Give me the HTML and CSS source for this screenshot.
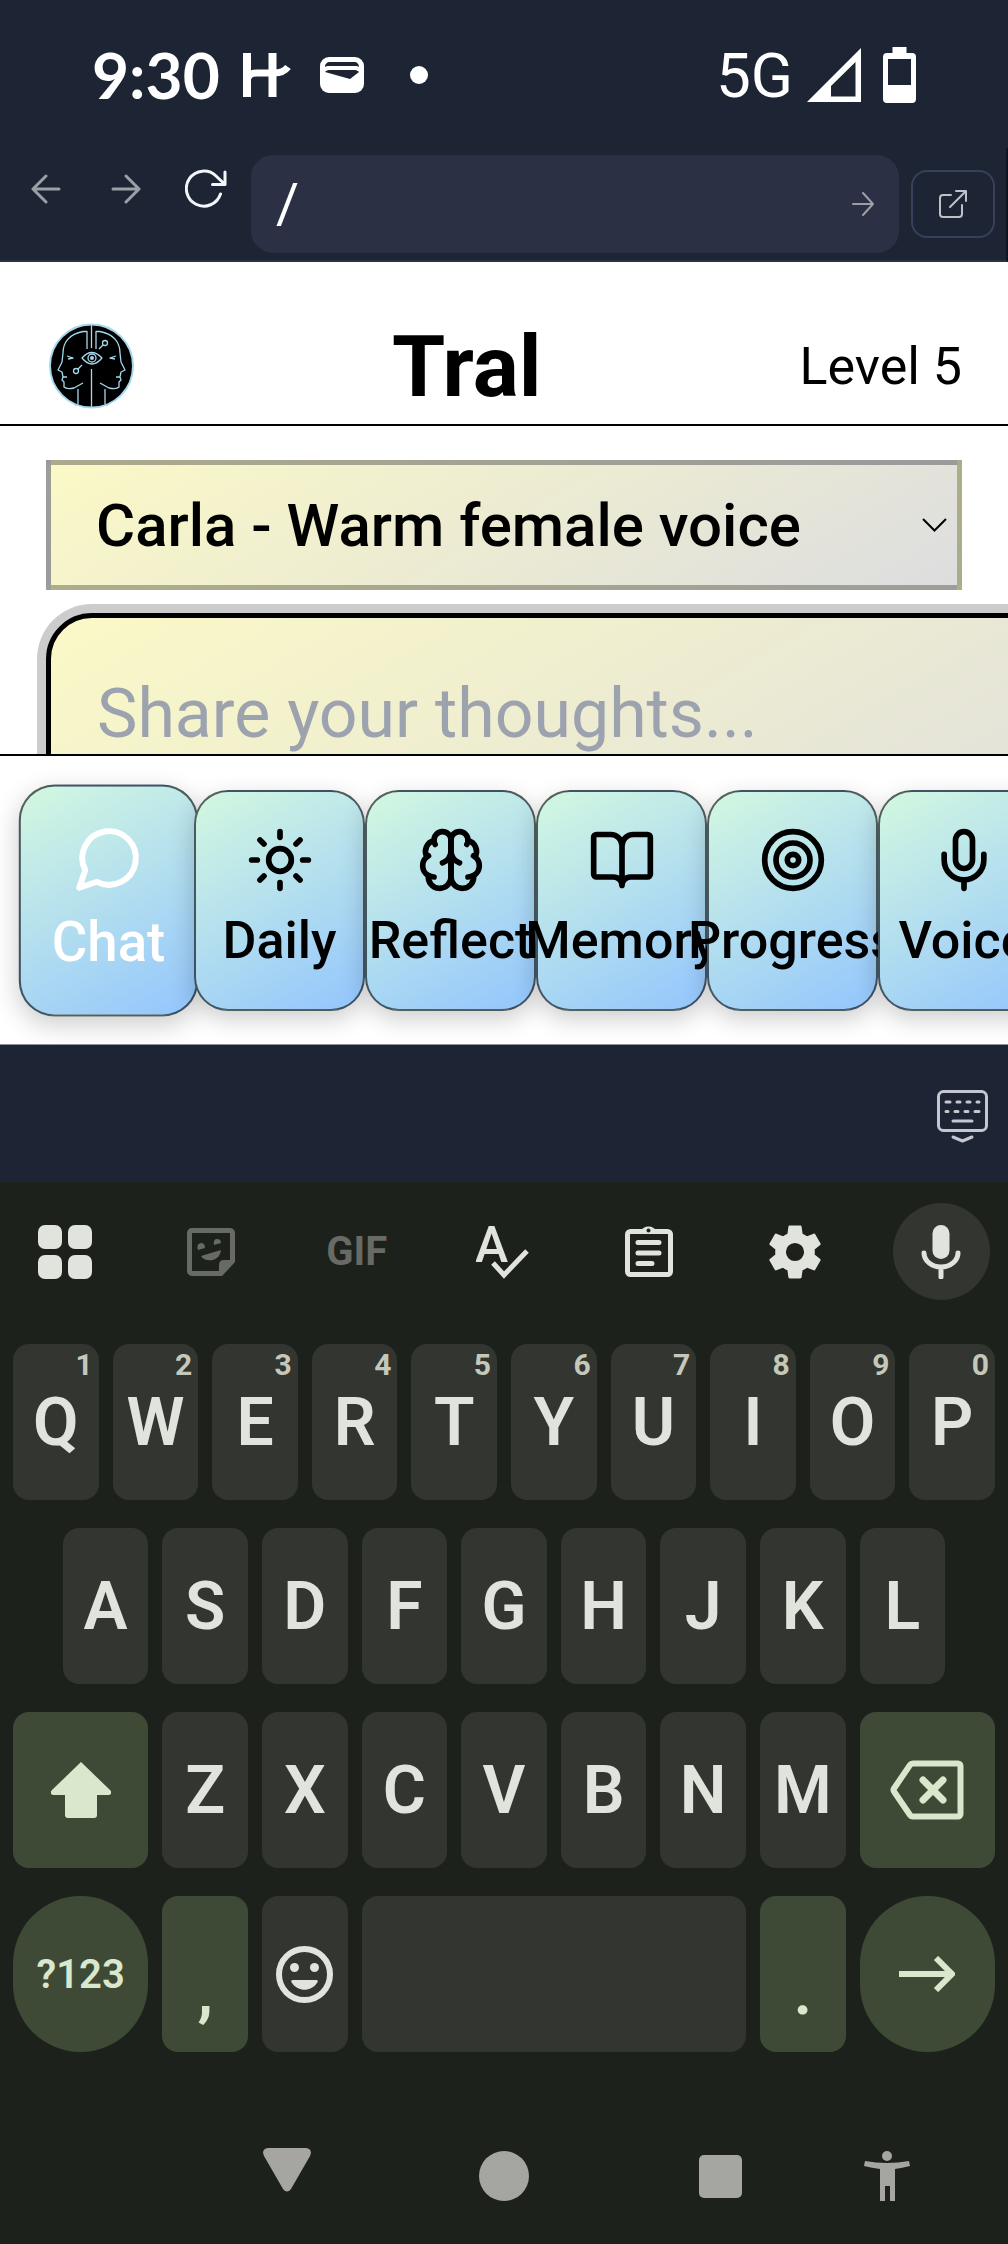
FILE: index.html
```html
<!DOCTYPE html>
<html lang="en">
<head>
<meta charset="utf-8">
<meta name="viewport" content="width=device-width, initial-scale=1">
<title>Tral</title>
<link rel="stylesheet" href="styles.css">
</head>
<body>
<div class="status">
  <div class="status-left">
    <time class="clock">9:30</time>
    <svg class="app-mark" width="50" height="46" viewBox="0 0 50 46"><path d="M5 1v44M30.500 1v44" fill="none" stroke="#fff" stroke-width="8"/><path d="M5 31c0-8 4-10 10-10h17c7 0 11-2 14-6" fill="none" stroke="#fff" stroke-width="7"/></svg>
    <svg class="wallet" width="44" height="36" viewBox="0 0 44 36"><rect width="44" height="36" rx="9" fill="#fff"/><path d="M5 10c0-3 2-5 5-5h24c3 0 5 2 5 5-1-1-2-1-4-1H9c-2 0-3 0-4 1zM5 15c1-1 2-2 4-2h26c2 0 3 1 4 2l-9 7z" fill="#1d2333"/></svg>
    <span class="dot"></span>
  </div>
  <div class="status-right">
    <span class="network">5G</span>
    <svg class="signal" width="54" height="54" viewBox="0 0 54 54"><path fill="#fff" fill-rule="evenodd" d="M0 54 54 0v54zM24 48.500h24.500V14L24 38z"/></svg>
    <svg width="33" height="56" viewBox="0 0 33 56"><path fill="#fff" fill-rule="evenodd" d="M9.500 0h14v6H29a4 4 0 0 1 4 4v42a4 4 0 0 1-4 4H4a4 4 0 0 1-4-4V10a4 4 0 0 1 4-4h5.500zM5 12v26h23V12z"/></svg>
  </div>
</div>

<div class="toolbar">
  <button class="tool" aria-label="Back"><svg width="30" height="30" viewBox="0 0 30 30"><path d="M28 15H2M15 2 2 15l13 13"/></svg></button>
  <button class="tool" aria-label="Forward"><svg width="30" height="30" viewBox="0 0 30 30"><path d="M2 15h26M15 2l13 13-13 13"/></svg></button>
  <button class="tool tool-active" aria-label="Reload"><svg width="42" height="40" viewBox="0 0 42 40"><path d="M35.500 25A17.500 17.500 0 1 1 31 7l9 8.500M40 3v12.500H27.500"/></svg></button>
  <form class="address">
    <input class="address-input" type="text" value="/" aria-label="Address">
    <button class="go" type="button" aria-label="Go"><svg width="22" height="24" viewBox="0 0 22 24"><path d="M1 12h20M11 1l10 11-10 11"/></svg></button>
  </form>
  <button class="open" aria-label="Open in new tab"><svg width="30" height="30" viewBox="0 0 30 30"><path d="M13 6H5a3 3 0 0 0-3 3v16a3 3 0 0 0 3 3h16a3 3 0 0 0 3-3v-9M12 18 28 2M18 2h10v10"/></svg></button>
</div>

<div class="app">
  <header class="header">
    <svg class="logo" width="85" height="86" viewBox="0 0 85 86">
      <circle cx="42.500" cy="43" r="41.500" fill="#000" stroke="#a6d8ee" stroke-width="2"/>
      <g fill="none" stroke="#a6d8ee" stroke-width="1.300" stroke-linejoin="round">
        <path d="M42.500 1v24M42.500 46v39"/>
        <path d="M38 26V8.500h-4C20 11 14 20 14 30l-1 9-4 8 4 2 1 5-1 3 2 2v5c2 2 5 2 10 1l9-5M29 66v15l-3 2"/>
        <path d="M47 26V8.500h4C65 11 71 20 71 30l1 9 4 8-4 2-1 5 1 3-2 2v5c-2 2-5 2-10 1l-9-5M56 66v15l3 2"/>
        <path d="M33 35q9.500-11 20 0-10 12-20 0z"/>
        <circle cx="43" cy="35" r="4"/><circle cx="56" cy="20" r="2.500"/><circle cx="27" cy="48" r="2.500"/>
        <path d="m54 22-4 4m-17 16-4 4M18 33l6 2-5 1M67 33l-6 2 5 1M14 54h4M71 54h-4"/>
      </g>
      <circle cx="43" cy="35" r="2" fill="#a6d8ee"/>
    </svg>
    <h1 class="title">Tral</h1>
    <span class="level">Level 5</span>
  </header>

  <main class="content">
    <div class="voice">
      <select class="voice-select" aria-label="Voice"><option>Carla - Warm female voice</option></select>
      <svg class="chevron" width="25" height="14" viewBox="0 0 25 14"><path d="M1 1l11.500 11.500L24 1" fill="none" stroke="#000" stroke-width="2"/></svg>
    </div>
    <textarea class="thoughts" placeholder="Share your thoughts..." aria-label="Your thoughts"></textarea>
  </main>

  <nav class="tabs">
    <button class="tab tab-current"><svg class="icon" viewBox="0 0 24 24"><path d="M7.900 20A9 9 0 1 0 4 16.100L2 22Z"/></svg>Chat</button>
    <button class="tab"><svg class="icon" viewBox="0 0 24 24"><circle cx="12" cy="12" r="4"/><path d="M12 2v2M12 20v2M4.930 4.930l1.410 1.410M17.660 17.660l1.410 1.410M2 12h2M20 12h2M6.340 17.660l-1.410 1.410M19.070 4.930l-1.410 1.410"/></svg>Daily</button>
    <button class="tab"><svg class="icon" viewBox="0 0 24 24"><path d="M12 5a3 3 0 1 0-5.997.125 4 4 0 0 0-2.526 5.770 4 4 0 0 0 .556 6.588A4 4 0 1 0 12 18Z"/><path d="M12 5a3 3 0 1 1 5.997.125 4 4 0 0 1 2.526 5.770 4 4 0 0 1-.556 6.588A4 4 0 1 1 12 18Z"/><path d="M15 13a4.500 4.500 0 0 1-3-4 4.500 4.500 0 0 1-3 4M17.599 6.500a3 3 0 0 0 .399-1.375M6.003 5.125A3 3 0 0 0 6.401 6.500M3.477 10.896a4 4 0 0 1 .585-.396M19.938 10.500a4 4 0 0 1 .585.396M6 18a4 4 0 0 1-1.967-.516M19.967 17.484A4 4 0 0 1 18 18"/></svg>Reflect</button>
    <button class="tab"><svg class="icon" viewBox="0 0 24 24"><path d="M12 7v14M3 18a1 1 0 0 1-1-1V4a1 1 0 0 1 1-1h5a4 4 0 0 1 4 4 4 4 0 0 1 4-4h5a1 1 0 0 1 1 1v13a1 1 0 0 1-1 1h-6a3 3 0 0 0-3 3 3 3 0 0 0-3-3z"/></svg>Memory</button>
    <button class="tab"><svg class="icon" viewBox="0 0 24 24"><circle cx="12" cy="12" r="10"/><circle cx="12" cy="12" r="6"/><circle cx="12" cy="12" r="2"/></svg>Progress</button>
    <button class="tab"><svg class="icon" viewBox="0 0 24 24"><path d="M12 2a3 3 0 0 0-3 3v7a3 3 0 0 0 6 0V5a3 3 0 0 0-3-3Z"/><path d="M19 10v2a7 7 0 0 1-14 0v-2M12 19v3"/></svg>Voice</button>
  </nav>
</div>

<div class="dock">
  <button class="hide-keys" aria-label="Hide keyboard"><svg width="52" height="54" viewBox="0 0 52 54" fill="none" stroke="#c4c7cf" stroke-width="3" stroke-linecap="round" stroke-linejoin="round"><rect x="1.500" y="1.500" width="48" height="39" rx="5"/><path d="M9 12h4M20 12h3M30 12h3M40 12h2M9 21.500h2M18 21.500h3M28 21.500h3M38 21.500h4M16 31h19M16 47l9.500 4 9.500-4"/></svg></button>
</div>

<div class="keyboard">
  <div class="suggest">
    <button class="chip" aria-label="Apps"><svg width="54" height="54" viewBox="0 0 54 54" fill="#e1e4dc"><rect width="24" height="24" rx="7"/><rect x="30" width="24" height="24" rx="7"/><rect y="30" width="24" height="24" rx="7"/><rect x="30" y="30" width="24" height="24" rx="7"/></svg></button>
    <button class="chip" aria-label="Stickers"><svg width="48" height="48" viewBox="0 0 48 48"><path d="M5 2.500h38A2.500 2.500 0 0 1 45.500 5v28L34 45.500H5A2.500 2.500 0 0 1 2.500 43V5A2.500 2.500 0 0 1 5 2.500z" fill="none" stroke="#686a64" stroke-width="5"/><path fill="#686a64" d="M32 46v-9q0-5 5-5h9zM14 28l20-6c-1 12-16 13-20 6zM11 22q-2-6 3-7 4 0 4 5zM27 17q-1-6 3-6 4 0 4 4z"/></svg></button>
    <button class="chip chip-gif">GIF</button>
    <button class="chip" aria-label="Spelling"><svg width="54" height="54" viewBox="0 0 54 54"><text class="spell" x="-1" y="37">A</text><path d="m17 38 11 12 23-24" fill="none" stroke="#e1e4dc" stroke-width="5"/></svg></button>
    <button class="chip" aria-label="Clipboard"><svg width="48" height="58" viewBox="0 0 48 58"><rect x="2.500" y="8.500" width="43" height="43" rx="3" fill="none" stroke="#e1e4dc" stroke-width="5"/><path d="M16 8a8 7 0 0 1 15 0z" fill="#e1e4dc"/><circle cx="23.500" cy="7.500" r="2" fill="#1d211c"/><path d="M13 19.500h21M13 30h21M13 40.500h14" stroke="#e1e4dc" stroke-width="5" stroke-linecap="round"/></svg></button>
    <button class="chip" aria-label="Settings"><svg width="66" height="66" viewBox="0 0 24 24"><path fill="#e1e4dc" d="M19.140 12.940c.04-.3.06-.61.06-.94 0-.32-.02-.64-.07-.94l2.030-1.580c.18-.14.23-.41.12-.61l-1.920-3.320c-.12-.22-.37-.29-.59-.22l-2.390.96c-.5-.38-1.030-.7-1.620-.94l-.36-2.540c-.04-.24-.24-.41-.48-.41h-3.840c-.24 0-.43.17-.47.41l-.36 2.540c-.59.24-1.130.57-1.620.94l-2.390-.96c-.22-.08-.47 0-.59.22L2.740 8.870c-.12.21-.08.47.12.61l2.030 1.580c-.05.3-.09.63-.09.94s.02.64.07.94l-2.030 1.580c-.18.14-.23.41-.12.61l1.920 3.320c.12.22.37.29.59.22l2.390-.96c.5.38 1.030.7 1.620.94l.36 2.540c.05.24.24.41.48.41h3.840c.24 0 .44-.17.47-.41l.36-2.540c.59-.24 1.130-.56 1.620-.94l2.390.96c.22.08.47 0 .59-.22l1.920-3.320c.12-.22.07-.47-.12-.61l-2.010-1.580zM12 15.300a3.300 3.300 0 1 1 0-6.600 3.300 3.300 0 0 1 0 6.600z"/></svg></button>
    <button class="chip chip-mic" aria-label="Voice input"><svg width="40" height="54" viewBox="0 0 40 54"><rect x="11.500" width="17" height="34" rx="8.500" fill="#e1e4dc"/><path d="M3 28a17 14 0 0 0 34 0M20 43v9" fill="none" stroke="#e1e4dc" stroke-width="5" stroke-linecap="round"/></svg></button>
  </div>
  <div class="keys">
    <button class="key">Q<span class="hint">1</span></button>
    <button class="key">W<span class="hint">2</span></button>
    <button class="key">E<span class="hint">3</span></button>
    <button class="key">R<span class="hint">4</span></button>
    <button class="key">T<span class="hint">5</span></button>
    <button class="key">Y<span class="hint">6</span></button>
    <button class="key">U<span class="hint">7</span></button>
    <button class="key">I<span class="hint">8</span></button>
    <button class="key">O<span class="hint">9</span></button>
    <button class="key">P<span class="hint">0</span></button>
    <button class="key key-home">A</button>
    <button class="key">S</button>
    <button class="key">D</button>
    <button class="key">F</button>
    <button class="key">G</button>
    <button class="key">H</button>
    <button class="key">J</button>
    <button class="key">K</button>
    <button class="key">L</button>
    <button class="key key-wide key-green" aria-label="Shift"><svg width="60" height="56" viewBox="0 0 60 56"><path fill="#d9e7cd" d="M30 0 59 28q2 2 1 4-1 1-3 1H46v20q0 3-3 3H17q-3 0-3-3V33H3q-2 0-3-1-1-2 1-4z"/></svg></button>
    <button class="key">Z</button>
    <button class="key">X</button>
    <button class="key">C</button>
    <button class="key">V</button>
    <button class="key">B</button>
    <button class="key">N</button>
    <button class="key">M</button>
    <button class="key key-wide key-green" aria-label="Delete"><svg width="74" height="60" viewBox="0 0 74 60" fill="none" stroke="#d9e7cd" stroke-width="6" stroke-linejoin="round" stroke-linecap="round"><path d="M23 3.500h45a2.500 2.500 0 0 1 2.500 2.500v48a2.500 2.500 0 0 1-2.500 2.500H23q-2 0-3-1.500L4 31.500q-1-1.500 0-3L20 5q1-1.500 3-1.500z"/><path stroke-width="7" d="m33 20 20 20M53 20 33 40"/></svg></button>
    <button class="key key-wide key-green key-round key-symbols">?123</button>
    <button class="key key-green key-low">,</button>
    <button class="key" aria-label="Emoji"><svg width="57" height="57" viewBox="0 0 57 57"><circle cx="28.500" cy="28.500" r="25.500" fill="none" stroke="#e1e4dc" stroke-width="6"/><path fill="#e1e4dc" d="M17 34h23q3 0 1 3c-6 9-19 9-25 0q-2-3 1-3z"/><circle cx="18.500" cy="21.500" r="4.500" fill="#e1e4dc"/><circle cx="38.500" cy="21.500" r="4.500" fill="#e1e4dc"/></svg></button>
    <button class="key key-space" aria-label="Space"></button>
    <button class="key key-green key-low">.</button>
    <button class="key key-wide key-green key-round" aria-label="Enter"><svg width="56" height="36" viewBox="0 0 56 36"><path d="M0 18h50M37 2l16 16-16 16" fill="none" stroke="#d9e7cd" stroke-width="6"/></svg></button>
  </div>
  <div class="system">
    <button class="sys sys-back" aria-label="Back"><svg width="48" height="44" viewBox="0 0 48 44"><path fill="#a5a5a2" d="M5 0h38q7 1 4 8L28 41q-4 5-8 0L1 8Q-2 1 5 0z"/></svg></button>
    <button class="sys" aria-label="Home"><svg width="50" height="50" viewBox="0 0 50 50"><circle cx="25" cy="25" r="25" fill="#a5a5a2"/></svg></button>
    <button class="sys" aria-label="Recent apps"><svg width="43" height="43" viewBox="0 0 43 43"><rect width="43" height="43" rx="5" fill="#a5a5a2"/></svg></button>
    <button class="sys" aria-label="Accessibility"><svg width="46" height="50" viewBox="0 0 46 50" fill="#a5a5a2"><circle cx="23" cy="5" r="5"/><path d="M1 10q22 4 44 0l1 5q-8 2-15 3v32h-5V35h-5v15h-5V18Q8 17 0 15z"/></svg></button>
  </div>
</div>
</body>
</html>
```

FILE: styles.css
```css
* {
  box-sizing: border-box;
}

body {
  margin: 0;
  height: 100vh;
  display: flex;
  flex-direction: column;
  overflow: hidden;
  background: #1d211c;
  color: #000;
  font-family: Roboto, "Liberation Sans", sans-serif;
}

button,
input,
select,
textarea {
  margin: 0;
  padding: 0;
  border: 0;
  background: none;
  color: inherit;
  font: inherit;
}

svg {
  display: block;
  flex: none;
}

/* Phone status bar */

.status {
  flex: none;
  display: flex;
  justify-content: space-between;
  align-items: center;
  height: 148px;
  padding: 2px 92px 0;
  background: #1d2433;
  color: #fff;
}

.status-left,
.status-right {
  display: flex;
  align-items: center;
}

.clock {
  font-family: Lato, Roboto, sans-serif;
  font-size: 64px;
  font-weight: 700;
  line-height: 72px;
}

.app-mark {
  margin-left: 22px;
}

.wallet {
  margin: 0 46px 0 28px;
}

.dot {
  width: 18px;
  height: 18px;
  border-radius: 50%;
  background: #fff;
}

.network {
  font-size: 62px;
}

.signal {
  margin: 0 22px 0 14px;
}

/* Preview toolbar */

.toolbar {
  flex: none;
  display: flex;
  align-items: flex-start;
  height: 114px;
  padding: 7px 11px 0 6px;
  border-right: 2px solid #10141f;
  border-bottom: 2px solid #2b3044;
  background: #1d2433;
}

.toolbar svg {
  fill: none;
  stroke: currentColor;
  stroke-width: 2;
  stroke-linecap: round;
  stroke-linejoin: round;
}

.tool {
  flex: none;
  display: grid;
  place-items: center;
  width: 80px;
  height: 68px;
  color: #9b9fa6;
}

.toolbar .tool svg {
  stroke-width: 3;
}

.tool-active {
  color: #f4f7fa;
}

.address {
  flex: 1;
  min-width: 0;
  display: flex;
  align-items: center;
  height: 98px;
  margin: 0 12px 0 5px;
  padding: 0 25px;
  border-radius: 22px;
  background: #2c3044;
}

.address-input {
  flex: 1;
  min-width: 0;
  color: #fff;
  font-size: 56px;
}

.go {
  flex: none;
  color: #9b9fa6;
}

.open {
  flex: none;
  display: grid;
  place-items: center;
  width: 84px;
  height: 68px;
  margin-top: 15px;
  border: 2px solid #38405a;
  border-radius: 16px;
  color: #bdc2c8;
}

/* App */

.app {
  flex: 1;
  min-height: 0;
  display: flex;
  flex-direction: column;
  overflow: hidden;
  background: #fff;
}

.header {
  flex: none;
  display: flex;
  justify-content: space-between;
  align-items: center;
  height: 164px;
  padding: 46px 46px 0 49px;
  border-bottom: 2px solid #000;
}

.title {
  margin: 0;
  font-size: 86px;
  font-weight: 700;
}

.level {
  font-size: 52px;
}

.content {
  flex: 1;
  min-height: 0;
  overflow: hidden;
  padding: 34px 46px 0;
}

.voice {
  display: grid;
  align-items: center;
  margin-bottom: 23px;
}

.voice-select {
  grid-area: 1 / 1;
  width: 100%;
  height: 130px;
  padding: 0 45px;
  appearance: none;
  border: 5px solid rgba(0, 0, 0, 0.3);
  border-radius: 0;
  background: linear-gradient(150deg, #fbf9c6, #dddddf);
  font-size: 60px;
  font-weight: 500;
}

.chevron {
  grid-area: 1 / 1;
  justify-self: end;
  margin-right: 15px;
  pointer-events: none;
}

.thoughts {
  display: block;
  width: 116%;
  height: 300px;
  padding: 54px 46px;
  resize: none;
  border: 5px solid #000;
  border-radius: 46px;
  background: linear-gradient(150deg, #fbf9c6, #dddddf);
  box-shadow: 0 0 0 9px rgba(0, 0, 0, 0.2);
  font-size: 68px;
  line-height: 84px;
}

.thoughts::placeholder {
  color: #9ca3af;
  opacity: 1;
}

.tabs {
  flex: none;
  display: flex;
  height: 290px;
  padding: 34px 23px 0;
  border-top: 2px solid #000;
}

.tab {
  position: relative;
  flex: none;
  display: flex;
  flex-direction: column;
  align-items: center;
  gap: 8px;
  width: 171px;
  height: 221px;
  padding-top: 34px;
  border: 2px solid rgba(0, 0, 0, 0.6);
  border-radius: 34px;
  background: linear-gradient(150deg, #d3f8e0, #93c5fd);
  box-shadow: 0 8px 24px rgba(0, 0, 0, 0.2);
  font-size: 52px;
  font-weight: 500;
  line-height: 78px;
  white-space: nowrap;
}

.tab-current {
  transform: scale(1.05);
  color: #fff;
}

.icon {
  width: 68px;
  height: 68px;
  fill: none;
  stroke: currentColor;
  stroke-width: 2;
  stroke-linecap: round;
  stroke-linejoin: round;
}

/* Strip above the keyboard */

.dock {
  flex: none;
  display: flex;
  justify-content: flex-end;
  align-items: center;
  height: 138px;
  padding: 6px 19px 0;
  border-top: 1px solid #8b929e;
  background: #1d2433;
}

/* Keyboard */

.keyboard {
  flex: none;
  background: #1d211c;
  color: #e1e4dc;
}

.suggest {
  display: flex;
  justify-content: space-between;
  padding: 21px 18px 30px 16px;
}

.chip {
  display: grid;
  place-items: center;
  width: 97px;
  height: 97px;
}

.chip-gif {
  color: #686a64;
  font-size: 40px;
  font-weight: 700;
}

.chip-mic {
  border-radius: 50%;
  background: #323530;
}

.spell {
  fill: #e1e4dc;
  font-size: 50px;
  font-weight: 500;
}

.keys {
  display: grid;
  grid-template-columns: repeat(20, 1fr);
  grid-auto-rows: 156px;
  row-gap: 28px;
  padding: 14px 6px 0;
}

.key {
  position: relative;
  grid-column: span 2;
  display: flex;
  justify-content: center;
  align-items: center;
  margin: 0 7px;
  border-radius: 16px;
  background: #323530;
  font-size: 66px;
  font-weight: 600;
}

.key-home {
  grid-column: 2 / span 2;
}

.key-home ~ .key-wide {
  grid-column: span 3;
}

.key-home ~ .key-space {
  grid-column: span 8;
}

.key-green {
  background: #3e4a36;
  color: #d9e7cd;
}

.key-round {
  border-radius: 68px;
}

.key-symbols {
  font-size: 40px;
}

.key-low {
  padding-top: 34px;
}

.hint {
  position: absolute;
  top: 6px;
  right: 6px;
  color: #c4c8ba;
  font-size: 30px;
  font-weight: 700;
  line-height: 30px;
}

/* Android navigation */

.system {
  display: grid;
  grid-template-columns: 13fr 13fr 13fr 7fr;
  place-items: center;
  height: 192px;
  padding: 56px 63px 0 179px;
}

.sys-back {
  padding-bottom: 12px;
}
```
